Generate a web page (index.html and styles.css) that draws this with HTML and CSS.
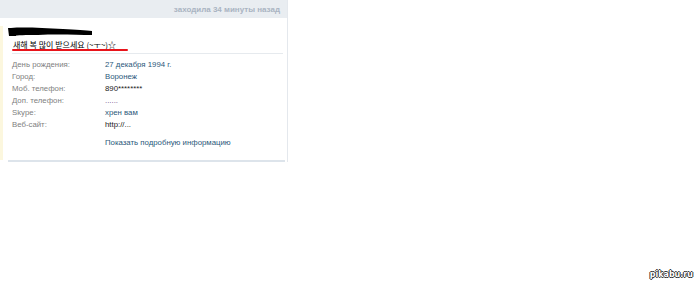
FILE: index.html
```html
<!DOCTYPE html>
<html lang="ru">
<head>
    <meta charset="UTF-8">
    <title>Профиль</title>
    <link rel="stylesheet" href="styles.css">
</head>
<body>
    <div class="page">
        <div class="profile">
            <!-- Header -->
            <div class="profileHeader">
                <span class="lastSeen">заходила 34 минуты назад</span>
            </div>

            <div class="profileBody">
                <div class="nameRow">
                    <svg class="scribble" width="90" height="12" viewBox="0 0 90 12">
                        <path d="M3 2 C 15 1, 35 2, 55 3 C 68 4, 78 4, 84 5 L 84 9 C 70 9, 50 8, 30 9 C 18 9, 9 9, 5 10 Z" fill="#000"/>
                        <path d="M0 2 L 8 2 L 8 10 L 1 10 Z" fill="#000"/>
                    </svg>
                </div>

                <div class="status">
                    <span class="statusText">새해 복 많이 받으세요 (~ㅜ~)☆</span>
                </div>

                <div class="info">
                    <div class="infoRow"><span class="label">День рождения:</span><span class="value link">27 декабря 1994 г.</span></div>
                    <div class="infoRow"><span class="label">Город:</span><span class="value link">Воронеж</span></div>
                    <div class="infoRow"><span class="label">Моб. телефон:</span><span class="value">890********</span></div>
                    <div class="infoRow"><span class="label">Доп. телефон:</span><span class="value dots">......</span></div>
                    <div class="infoRow"><span class="label">Skype:</span><span class="value link">хрен вам</span></div>
                    <div class="infoRow"><span class="label">Веб-сайт:</span><span class="value">http://...</span></div>
                    <div class="infoRow more"><span class="label"></span><span class="value link">Показать подробную информацию</span></div>
                </div>
            </div>
        </div>

        <div class="watermark">pikabu.ru</div>
    </div>
</body>
</html>
```

FILE: styles.css
```css
/* Basic Styles */
body {
    margin: 0;
    padding: 0;
    background-color: #fff;
    font-family: "Liberation Sans", sans-serif;
    font-size: 7.8px;
}

.page {
    position: relative;
    width: 700px;
    height: 288px;
}

/* Profile card */
.profile {
    width: 287px;
    border-right: 1px solid #e4e8ed;
}

.profileHeader {
    height: 18px;
    background-color: #e9edf1;
    display: flex;
    justify-content: flex-end;
    align-items: center;
    padding-right: 7px;
}

.lastSeen {
    font-weight: bold;
    font-size: 8px;
    color: #a9b4c2;
}

.profileBody {
    border-left: 3px solid #fcf7de;
    margin-top: 8px;
    padding-bottom: 11px;
}

.nameRow {
    height: 10px;
    position: relative;
}

.scribble {
    position: absolute;
    left: 5px;
    top: 0;
}

/* Status */
.status {
    margin: 0 4px 0 9px;
    padding: 3px 0 2px 1px;
    border-bottom: 1px solid #e6eaee;
    position: relative;
    height: 12px;
    line-height: 12px;
}

.status::after {
    content: "";
    position: absolute;
    left: 0;
    top: 13px;
    width: 116px;
    height: 2px;
    background-color: #e8141b;
    border-radius: 1px;
}

.statusText {
    font-family: "Noto Sans CJK KR", sans-serif;
    font-size: 8px;
    color: #000;
    text-decoration: underline;
}

/* Info rows */
.info {
    padding: 5px 0 0 9px;
}

.infoRow {
    display: flex;
    height: 12px;
    line-height: 12px;
}

.infoRow.more {
    margin-top: 6px;
}

.label {
    width: 93px;
    color: #808080;
}

.value {
    color: #222;
}

.value.link {
    color: #2b587a;
}

.value.dots {
    color: #6a3f8a;
}

.profile::after {
    content: "";
    display: block;
    margin: 0 2px 0 8px;
    height: 2px;
    background-color: #dde4eb;
}

/* Watermark */
.watermark {
    position: absolute;
    right: 7px;
    bottom: 9px;
    font-family: "DejaVu Sans", sans-serif;
    font-weight: bold;
    font-size: 8px;
    color: #fff;
    text-shadow: -1px 0 #333, 1px 0 #333, 0 -1px #333, 0 1px #333;
}
```
